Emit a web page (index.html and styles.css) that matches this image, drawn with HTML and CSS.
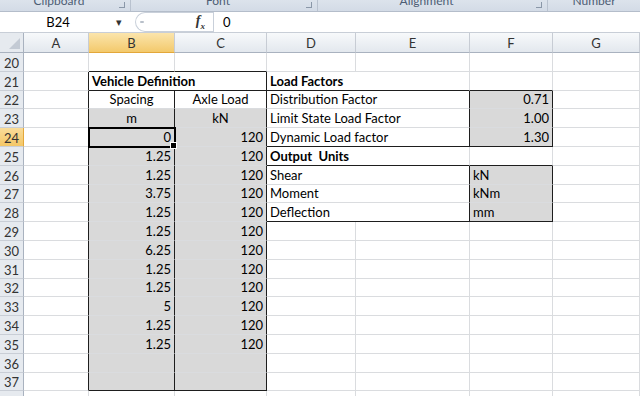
FILE: index.html
```html
<!DOCTYPE html>
<html lang="en">
<head>
    <meta charset="UTF-8">
    <title>Vehicle Definition - Excel</title>
    <link rel="stylesheet" href="styles.css">
</head>
<body>

    <div class="ribbon">
        <div class="group g1"><span class="label">Clipboard</span><span class="launch"></span></div>
        <div class="group g2"><span class="label">Font</span><span class="launch"></span></div>
        <div class="group g3"><span class="label">Alignment</span><span class="launch"></span></div>
        <div class="group g4"><span class="label">Number</span></div>
    </div>

    <div class="formula-bar">
        <div class="name-box">
            <span class="ref">B24</span>
            <span class="drop">&#9662;</span>
        </div>
        <div class="fx-area">
            <span class="grip"></span>
            <span class="fx">f<sub>x</sub></span>
        </div>
        <div class="formula">0</div>
    </div>

    <table class="sheet">
        <colgroup>
            <col class="w-head"><col class="w-a"><col class="w-b"><col class="w-c">
            <col class="w-d"><col class="w-e"><col class="w-f"><col class="w-g">
        </colgroup>
        <tr class="hd">
            <th class="corner"><span class="tri"></span></th>
            <th class="col">A</th><th class="col sel">B</th><th class="col">C</th>
            <th class="col">D</th><th class="col">E</th><th class="col">F</th><th class="col">G</th>
        </tr>
        <tr>
            <th class="row">20</th>
            <td></td><td class="kb"></td><td class="kb"></td><td></td><td></td><td></td><td></td>
        </tr>
        <tr>
            <th class="row">21</th>
            <td class="kr"></td>
            <td colspan="2" class="b kr kb">Vehicle Definition</td>
            <td colspan="2" class="b kb">Load Factors</td>
            <td class="kb"></td><td></td>
        </tr>
        <tr>
            <th class="row">22</th>
            <td class="kr"></td>
            <td class="c kr">Spacing</td><td class="c kr">Axle Load</td>
            <td colspan="2" class="kr">Distribution Factor</td>
            <td class="g n kr">0.71</td><td></td>
        </tr>
        <tr>
            <th class="row">23</th>
            <td class="kr"></td>
            <td class="g c kr">m</td><td class="g c kr">kN</td>
            <td colspan="2" class="kr">Limit State Load Factor</td>
            <td class="g n kr">1.00</td><td></td>
        </tr>
        <tr>
            <th class="row sel">24</th>
            <td class="kr"></td>
            <td class="g n kr active">0</td><td class="g n kr">120</td>
            <td colspan="2" class="kr kb">Dynamic Load factor</td>
            <td class="g n kr kb">1.30</td><td></td>
        </tr>
        <tr>
            <th class="row">25</th>
            <td class="kr"></td>
            <td class="g n kr">1.25</td><td class="g n kr">120</td>
            <td colspan="2" class="b kb">Output&nbsp; Units</td>
            <td class="kb"></td><td></td>
        </tr>
        <tr>
            <th class="row">26</th>
            <td class="kr"></td>
            <td class="g n kr">1.25</td><td class="g n kr">120</td>
            <td colspan="2" class="kr">Shear</td>
            <td class="g kr">kN</td><td></td>
        </tr>
        <tr>
            <th class="row">27</th>
            <td class="kr"></td>
            <td class="g n kr">3.75</td><td class="g n kr">120</td>
            <td colspan="2" class="kr">Moment</td>
            <td class="g kr">kNm</td><td></td>
        </tr>
        <tr>
            <th class="row">28</th>
            <td class="kr"></td>
            <td class="g n kr">1.25</td><td class="g n kr">120</td>
            <td colspan="2" class="kr kb">Deflection</td>
            <td class="g kr kb">mm</td><td></td>
        </tr>
        <tr>
            <th class="row">29</th>
            <td class="kr"></td>
            <td class="g n kr">1.25</td><td class="g n kr">120</td>
            <td></td><td></td><td></td><td></td>
        </tr>
        <tr>
            <th class="row">30</th>
            <td class="kr"></td>
            <td class="g n kr">6.25</td><td class="g n kr">120</td>
            <td></td><td></td><td></td><td></td>
        </tr>
        <tr>
            <th class="row">31</th>
            <td class="kr"></td>
            <td class="g n kr">1.25</td><td class="g n kr">120</td>
            <td></td><td></td><td></td><td></td>
        </tr>
        <tr>
            <th class="row">32</th>
            <td class="kr"></td>
            <td class="g n kr">1.25</td><td class="g n kr">120</td>
            <td></td><td></td><td></td><td></td>
        </tr>
        <tr>
            <th class="row">33</th>
            <td class="kr"></td>
            <td class="g n kr">5</td><td class="g n kr">120</td>
            <td></td><td></td><td></td><td></td>
        </tr>
        <tr>
            <th class="row">34</th>
            <td class="kr"></td>
            <td class="g n kr">1.25</td><td class="g n kr">120</td>
            <td></td><td></td><td></td><td></td>
        </tr>
        <tr>
            <th class="row">35</th>
            <td class="kr"></td>
            <td class="g n kr">1.25</td><td class="g n kr">120</td>
            <td></td><td></td><td></td><td></td>
        </tr>
        <tr>
            <th class="row">36</th>
            <td class="kr"></td>
            <td class="g kr"></td><td class="g kr"></td>
            <td></td><td></td><td></td><td></td>
        </tr>
        <tr>
            <th class="row">37</th>
            <td class="kr"></td>
            <td class="g kr kb"></td><td class="g kr kb"></td>
            <td></td><td></td><td></td><td></td>
        </tr>
        <tr>
            <th class="row">38</th>
            <td></td><td></td><td></td><td></td><td></td><td></td><td></td>
        </tr>
    </table>

</body>
</html>
```

FILE: styles.css
```css
body {
    margin: 0;
    width: 640px;
    height: 396px;
    overflow: hidden;
    background: #fff;
    font-family: Lato, "Open Sans", sans-serif;
    color: #000;
}

/* ribbon group captions, cut off at the top */
.ribbon {
    display: flex;
    height: 11px;
    overflow: hidden;
    background: linear-gradient(#dce3ec, #d3dbe6);
    border-bottom: 1px solid #b4bdca;
}
.group {
    display: flex;
    justify-content: center;
    position: relative;
    padding-right: 12px;
    box-sizing: border-box;
    border-right: 1px solid #b9c2cf;
}
.g1 { width: 131px; }
.g2 { width: 187px; }
.g3 { width: 230px; }
.g4 { flex: 1; border-right: none; padding-right: 0; }
.label {
    font-size: 12px;
    line-height: 14px;
    margin-top: -6px;
    color: #4d5d74;
}
.launch {
    position: absolute;
    right: 5px;
    top: 2px;
    width: 5px;
    height: 5px;
    border-right: 1px solid #8a97a8;
    border-bottom: 1px solid #8a97a8;
}

.formula-bar {
    display: flex;
    height: 20px;
    border-bottom: 1px solid #c8ced7;
    background: #fff;
}
.name-box {
    width: 132px;
    display: flex;
    align-items: center;
    font-size: 13px;
}
.ref {
    width: 116px;
    text-align: center;
}
.drop {
    font-size: 11px;
    color: #333;
}
.fx-area {
    width: 78px;
    margin-left: 3px;
    display: flex;
    align-items: center;
    justify-content: space-between;
    border: 1px solid #c9d0da;
    border-right: none;
    border-radius: 10px 0 0 10px;
    box-sizing: border-box;
    padding: 0 8px 0 4px;
}
.grip {
    width: 4px;
    height: 2px;
    background: #b9c0ca;
    border-radius: 1px;
}
.fx {
    font-family: "Liberation Serif", serif;
    font-style: italic;
    font-size: 14px;
    font-weight: bold;
    color: #333;
}
.fx sub {
    font-size: 9px;
}
.formula {
    flex: 1;
    border-left: 1px solid #c9d0da;
    padding-left: 9px;
    font-size: 13px;
    line-height: 20px;
}

/* grid */
.sheet {
    border-collapse: separate;
    border-spacing: 0;
    table-layout: fixed;
    width: 640px;
}
.w-head { width: 24px; }
.w-a { width: 65px; }
.w-b { width: 86px; }
.w-c { width: 92px; }
.w-d { width: 89px; }
.w-e { width: 114px; }
.w-f { width: 83px; }
.w-g { width: 87px; }

.sheet tr { height: 18.8px; }
.sheet tr.hd { height: 20px; }

.sheet td {
    padding: 0 3px 1px;
    border-right: 1px solid #dadcdf;
    border-bottom: 1px solid #dadcdf;
    font-size: 13px;
    line-height: 16px;
    white-space: nowrap;
    overflow: hidden;
    vertical-align: bottom;
}
.sheet th {
    padding: 0;
    font-weight: normal;
    font-size: 13px;
    color: #333;
    white-space: nowrap;
}
.col {
    background: linear-gradient(#f7f9fb, #e3e8ee);
    border-right: 1px solid #c7ccd4;
    border-bottom: 1px solid #a9b2bf;
}
.col.sel {
    background: linear-gradient(#fbe5ac, #f3c96c);
    border-bottom-color: #e3a73a;
}
.corner {
    position: relative;
    background: #e6eaef;
    border-right: 1px solid #a9b2bf;
    border-bottom: 1px solid #a9b2bf;
}
.tri {
    position: absolute;
    right: 3px;
    bottom: 3px;
    width: 0;
    height: 0;
    border-left: 11px solid transparent;
    border-bottom: 11px solid #c3cad4;
}
.row {
    background: #e6eaef;
    border-right: 1px solid #a9b2bf;
    border-bottom: 1px solid #c9ced6;
    text-align: center;
    line-height: 16px;
    vertical-align: bottom;
}
.row.sel {
    background: linear-gradient(#f9dc9a, #f4c766);
    border-right-color: #e3a73a;
}

.b { font-weight: bold; }
.c { text-align: center; }
.n { text-align: right; padding-right: 3px; }
.g {
    background: #d9d9d9;
    border-right-color: #d9d9d9;
    border-bottom-color: #d9d9d9;
}
.sheet td.kr { border-right-color: #1e1e1e; }
.sheet td.kb { border-bottom-color: #1e1e1e; }

/* selected cell */
.sheet td.active {
    position: relative;
    overflow: visible;
    outline: 2px solid #000;
    outline-offset: -1px;
}
.active::after {
    content: "";
    position: absolute;
    right: -3px;
    bottom: -3px;
    width: 5px;
    height: 5px;
    background: #000;
    border: 1px solid #fff;
    z-index: 2;
}
```
